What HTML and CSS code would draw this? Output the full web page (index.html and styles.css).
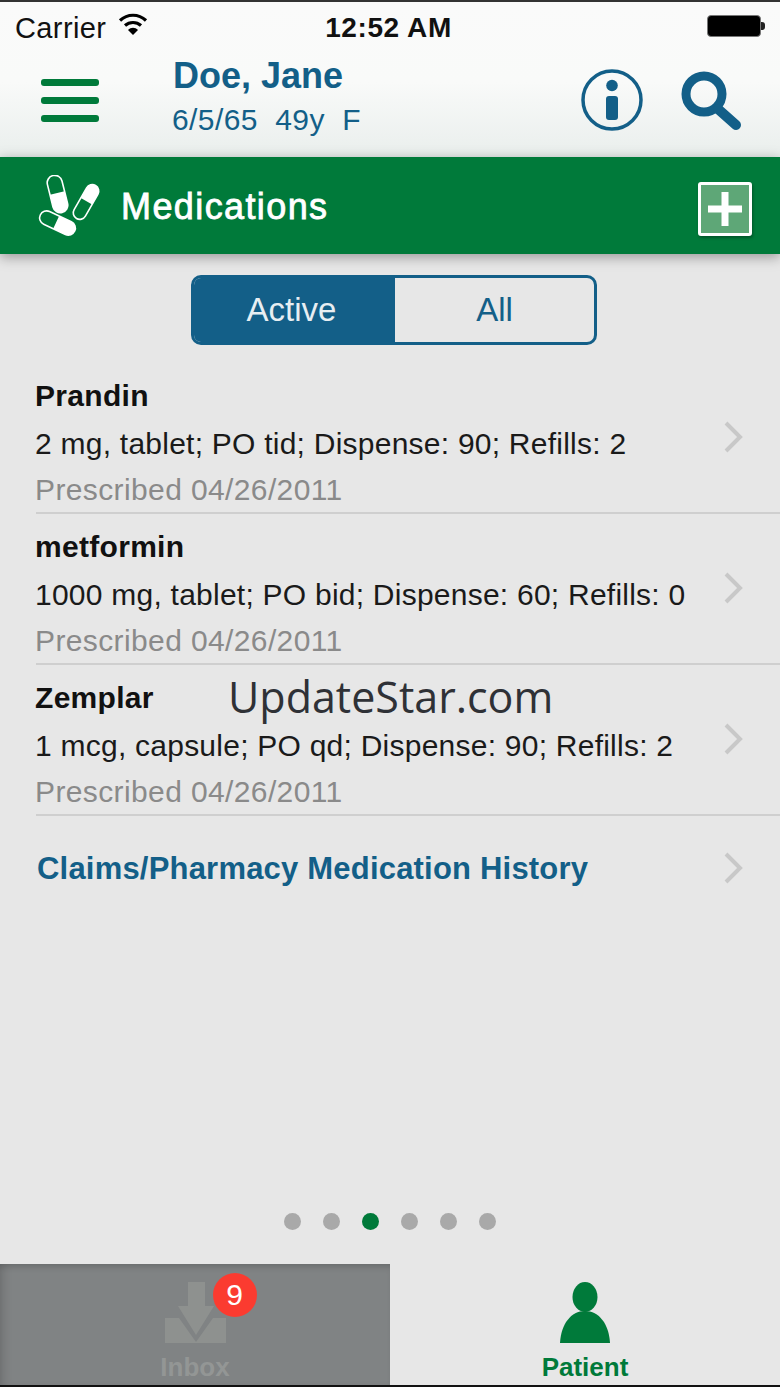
FILE: index.html
```html
<!DOCTYPE html>
<html>
<head>
    <title>Medications</title>
    <link rel="stylesheet" href="styles.css">
</head>

<body>
    <div class="screen">
        <div class="top">
            <div class="status">
                <div class="status-left">
                    <span>Carrier</span>
                    <svg class="wifi" width="30" height="24" viewBox="0 0 30 24">
                        <path d="M2 8.500C9.500 1.500 20.500 1.500 28 8.500" fill="none" stroke="#000" stroke-width="3.200"/>
                        <path d="M7 13.500C11.500 9.500 18.500 9.500 23 13.500" fill="none" stroke="#000" stroke-width="3.200"/>
                        <path d="M10 18C13 15 17 15 20 18L15 23Z" fill="#000"/>
                    </svg>
                </div>
                <div class="time">12:52 AM</div>
                <div class="status-right">
                    <div class="battery"><div class="battery-tip"></div></div>
                </div>
            </div>
            <div class="patient">
                <div class="menu"><i></i><i></i><i></i></div>
                <div class="patient-info">
                    <div class="patient-name">Doe, Jane</div>
                    <div class="patient-sub">6/5/65&nbsp;&nbsp;49y&nbsp;&nbsp;F</div>
                </div>
                <svg class="info-icon" width="62" height="62" viewBox="0 0 62 62">
                    <circle cx="31" cy="31" r="29" fill="none" stroke="#135f88" stroke-width="3.500"/>
                    <circle cx="31" cy="16.500" r="5.800" fill="#135f88"/>
                    <rect x="25" y="27" width="12" height="24" rx="3" fill="#135f88"/>
                </svg>
                <svg class="search-icon" width="62" height="62" viewBox="0 0 62 62">
                    <circle cx="24" cy="25" r="18" fill="none" stroke="#135f88" stroke-width="9"/>
                    <path d="M38 40L56 56" stroke="#135f88" stroke-width="10" stroke-linecap="round"/>
                </svg>
            </div>
        </div>

        <div class="titlebar">
            <svg class="pills" width="64" height="62" viewBox="0 0 64 62">
                <g transform="rotate(-14 20.500 19)">
                    <rect x="13" y="0" width="15" height="38" rx="7.500" fill="none" stroke="#fff" stroke-width="1.600"/>
                    <path d="M13 18H28V30.500A7.500 7.500 0 0 1 13 30.500Z" fill="#fff"/>
                </g>
                <g transform="rotate(30 49 27)">
                    <rect x="42.500" y="8" width="13" height="38" rx="6.500" fill="none" stroke="#fff" stroke-width="1.600"/>
                    <path d="M42.500 26V14.500A6.500 6.500 0 0 1 55.500 14.500V26Z" fill="#fff"/>
                </g>
                <g transform="rotate(25 20.500 48)">
                    <rect x="1.500" y="41" width="38" height="14" rx="7" fill="none" stroke="#fff" stroke-width="1.600"/>
                    <path d="M19 41H32.500A7 7 0 0 1 32.500 55H19Z" fill="#fff"/>
                </g>
            </svg>
            <div class="title">Medications</div>
            <div class="add-btn">
                <svg width="34" height="34" viewBox="0 0 34 34">
                    <path d="M17 0V34M0 17H34" stroke="#fff" stroke-width="7"/>
                </svg>
            </div>
        </div>

        <div class="content">
            <div class="segment">
                <div class="segment-item active">Active</div>
                <div class="segment-item">All</div>
            </div>

            <div class="med-row">
                <div class="med-text">
                    <div class="med-name">Prandin</div>
                    <div class="med-detail">2 mg, tablet; PO tid; Dispense: 90; Refills: 2</div>
                    <div class="med-date">Prescribed 04/26/2011</div>
                </div>
                <svg class="chevron" width="20" height="32" viewBox="0 0 20 32"><path d="M3 2L17 16L3 30" fill="none" stroke="#c8c8c8" stroke-width="4"/></svg>
            </div>
            <div class="med-row">
                <div class="med-text">
                    <div class="med-name">metformin</div>
                    <div class="med-detail">1000 mg, tablet; PO bid; Dispense: 60; Refills: 0</div>
                    <div class="med-date">Prescribed 04/26/2011</div>
                </div>
                <svg class="chevron" width="20" height="32" viewBox="0 0 20 32"><path d="M3 2L17 16L3 30" fill="none" stroke="#c8c8c8" stroke-width="4"/></svg>
            </div>
            <div class="med-row">
                <div class="med-text">
                    <div class="med-name">Zemplar</div>
                    <div class="med-detail">1 mcg, capsule; PO qd; Dispense: 90; Refills: 2</div>
                    <div class="med-date">Prescribed 04/26/2011</div>
                </div>
                <svg class="chevron" width="20" height="32" viewBox="0 0 20 32"><path d="M3 2L17 16L3 30" fill="none" stroke="#c8c8c8" stroke-width="4"/></svg>
            </div>

            <div class="history-row">
                <div class="history-link">Claims/Pharmacy Medication History</div>
                <svg class="chevron" width="20" height="32" viewBox="0 0 20 32"><path d="M3 2L17 16L3 30" fill="none" stroke="#c8c8c8" stroke-width="4"/></svg>
            </div>

            <div class="dots">
                <i></i><i></i><i class="current"></i><i></i><i></i><i></i>
            </div>
        </div>

        <div class="tabbar">
            <div class="tab tab-inbox">
                <div class="tab-icon">
                    <svg width="63" height="62" viewBox="0 0 63 62">
                        <path d="M1 36H15L32 60L49 36H62V61H1Z" fill="#8e918f"/>
                        <path d="M24 0H41V24H50L32 53L14 24H24Z" fill="#8e918f"/>
                    </svg>
                    <div class="badge">9</div>
                </div>
                <div class="tab-label">Inbox</div>
            </div>
            <div class="tab tab-patient">
                <div class="tab-icon">
                    <svg width="50" height="62" viewBox="0 0 50 62">
                        <ellipse cx="25" cy="15" rx="12.500" ry="15" fill="#007a3a"/>
                        <path d="M0 61C1 42 11 29 25 29C39 29 49 42 50 61Z" fill="#007a3a"/>
                    </svg>
                </div>
                <div class="tab-label">Patient</div>
            </div>
        </div>

        <div class="watermark">UpdateStar.com</div>
    </div>
</body>

</html>
```

FILE: styles.css
```css
body {
    margin: 0;
    padding: 0;
    font-family: "Liberation Sans", Arial, sans-serif;
    background-color: #e7e7e7;
}
.screen {
    position: relative;
    display: flex;
    flex-direction: column;
    width: 780px;
    height: 1387px;
    overflow: hidden;
    border-bottom: 2px solid #111;
    box-sizing: border-box;
}

/* status bar + patient header */
.top {
    height: 157px;
    box-sizing: border-box;
    border-top: 2px solid #333;
    background: linear-gradient(#fafafa 0, #f9faf9 80px, #e9eeec 157px);
}
.status {
    display: flex;
    align-items: center;
    height: 48px;
    box-sizing: border-box;
    padding: 4px 19px 0 15px;
    font-size: 28px;
    color: #111;
}
.status-left {
    display: flex;
    align-items: center;
    gap: 12px;
    flex: 1;
    font-size: 29px;
    letter-spacing: 0.400px;
}
.status-right {
    display: flex;
    justify-content: flex-end;
    flex: 1;
}
.wifi {
    margin-top: -8px;
}
.time {
    margin-left: 1px;
    font-weight: bold;
    letter-spacing: 0.600px;
}
.battery {
    position: relative;
    width: 54px;
    height: 22px;
    margin-top: -5px;
    box-sizing: border-box;
    border: 1px solid #777;
    border-radius: 4px;
    background-color: #000;
}
.battery-tip {
    position: absolute;
    right: -5px;
    top: 6px;
    width: 4px;
    height: 8px;
    border-radius: 0 3px 3px 0;
    background-color: #222;
}
.patient {
    display: flex;
    align-items: center;
    height: 100px;
    padding-left: 41px;
}
.menu {
    display: flex;
    flex-direction: column;
    gap: 11px;
    width: 58px;
}
.menu i {
    display: block;
    height: 7px;
    border-radius: 3px;
    background-color: #007a3a;
}
.patient-info {
    width: 408px;
    margin-left: 74px;
    margin-top: -5px;
    color: #135f88;
}
.patient-name {
    font-size: 36px;
    font-weight: bold;
    line-height: 44px;
}
.patient-sub {
    margin-left: -1px;
    font-size: 30px;
    line-height: 44px;
    letter-spacing: 0.400px;
}
.info-icon {
    margin-right: 37px;
}

/* green title bar */
.titlebar {
    position: relative;
    display: flex;
    align-items: center;
    height: 97px;
    padding-left: 37px;
    color: #fff;
    background-color: #007a3a;
    box-shadow: 0 3px 12px rgba(0, 0, 0, 0.35);
}
.title {
    margin-left: 20px;
    margin-top: 3px;
    font-size: 36px;
    letter-spacing: 1.400px;
    -webkit-text-stroke: 0.800px #fff;
}
.add-btn {
    display: flex;
    align-items: center;
    justify-content: center;
    width: 54px;
    height: 54px;
    margin-left: auto;
    margin-right: 28px;
    margin-top: 6px;
    box-sizing: border-box;
    border: 3px solid #fff;
    border-radius: 3px;
    background-color: #5ea777;
    box-shadow: 1px 2px 3px rgba(0, 0, 0, 0.3);
}

/* list */
.content {
    display: flex;
    flex-direction: column;
    flex: 1;
    background-color: #e7e7e7;
}
.segment {
    display: flex;
    width: 406px;
    height: 70px;
    margin: 21px 0 18px 191px;
    box-sizing: border-box;
    border: 3px solid #135f88;
    border-radius: 10px;
    overflow: hidden;
}
.segment-item {
    flex: 1;
    display: flex;
    align-items: center;
    justify-content: center;
    font-size: 33px;
    color: #135f88;
}
.segment-item.active {
    flex: none;
    width: 201px;
    box-sizing: border-box;
    padding-right: 6px;
    color: #e7eef2;
    background-color: #135f88;
}
.med-row {
    display: flex;
    align-items: center;
    justify-content: space-between;
    height: 151px;
    box-sizing: border-box;
    margin-left: 36px;
    padding-right: 37px;
    border-bottom: 2px solid #cfcfcf;
}
.med-text {
    margin-left: -1px;
    padding-top: 8px;
}
.med-name {
    font-size: 30px;
    font-weight: bold;
    line-height: 48px;
    letter-spacing: 0.300px;
    color: #111;
}
.med-detail {
    font-size: 30px;
    line-height: 48px;
    letter-spacing: 0.240px;
    color: #1a1a1a;
}
.med-date {
    font-size: 30px;
    line-height: 44px;
    letter-spacing: 0.380px;
    color: #8a8a8a;
}
.chevron {
    margin-top: -2px;
}
.history-row {
    display: flex;
    align-items: center;
    justify-content: space-between;
    height: 106px;
    margin-left: 37px;
    padding-right: 37px;
}
.history-link {
    font-size: 31px;
    font-weight: bold;
    letter-spacing: 0.200px;
    color: #135f88;
}
.dots {
    display: flex;
    justify-content: center;
    gap: 22px;
    margin-top: auto;
    margin-bottom: 34px;
}
.dots i {
    display: block;
    width: 17px;
    height: 17px;
    border-radius: 50%;
    background-color: #a9a9a9;
}
.dots i.current {
    background-color: #007a3a;
}

/* tab bar */
.tabbar {
    display: flex;
    height: 121px;
}
.tab {
    flex: 1;
    display: flex;
    flex-direction: column;
    align-items: center;
    padding-top: 18px;
    box-sizing: border-box;
}
.tab-inbox {
    color: #939695;
    background-color: #808384;
    box-shadow: inset 0 6px 6px -3px rgba(0, 0, 0, 0.15), inset 8px 0 8px -4px rgba(0, 0, 0, 0.12);
}
.tab-patient {
    color: #007a3a;
    background-color: #e7e7e7;
}
.tab-icon {
    position: relative;
    height: 62px;
}
.tab-label {
    margin-top: 8px;
    font-size: 26px;
    font-weight: bold;
    line-height: 30px;
}
.badge {
    position: absolute;
    top: -9px;
    left: 49px;
    display: flex;
    align-items: center;
    justify-content: center;
    width: 44px;
    height: 44px;
    border-radius: 50%;
    font-size: 30px;
    color: #fff;
    background-color: #fb3b30;
}
.watermark {
    position: absolute;
    top: 668px;
    left: 228px;
    font-family: "Open Sans", sans-serif;
    font-size: 43px;
    line-height: 58px;
    color: #2f3136;
}
```
